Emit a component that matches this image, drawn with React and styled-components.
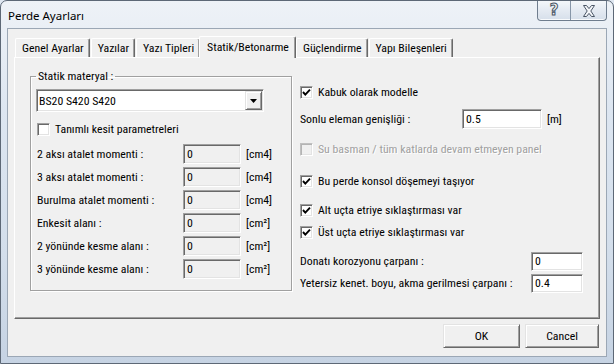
import React from 'react';
import styled, { createGlobalStyle, css } from 'styled-components';

const GlobalStyle = createGlobalStyle`
  html, body { margin: 0; padding: 0; background: #dfe7f1; }
  body {
    font-family: "Roboto", "Liberation Sans", Arial, sans-serif;
    font-stretch: 75%;
    font-size: 11.8px;
    color: #000;
  }
  * { box-sizing: border-box; }
`;

const sunken = css`
  border: 1px solid;
  border-color: #a0a0a0 #ffffff #ffffff #a0a0a0;
  box-shadow: inset 1px 1px 0 #696969, inset -1px -1px 0 #e3e3e3;
`;

const raised = css`
  border: 1px solid;
  border-color: #e3e3e3 #696969 #696969 #e3e3e3;
  box-shadow: inset 1px 1px 0 #ffffff, inset -1px -1px 0 #a0a0a0;
`;

const Window = styled.div`
  width: 614px;
  height: 364px;
  display: flex;
  flex-direction: column;
  padding: 0 6px 6px 6px;
  border: 1px solid #5d6876;
  border-radius: 7px 7px 0 0;
  background: linear-gradient(180deg, #eef2f7 0%, #dde6f1 30%, #d3deeb 70%, #c6d3e3 100%);
`;

const TitleBar = styled.div`
  height: 27px;
  display: flex;
  align-items: flex-start;
  padding-left: 1px;
`;

const Title = styled.span`
  font-family: "Noto Sans", "Open Sans", sans-serif;
  font-stretch: 100%;
  font-size: 11.5px;
  line-height: 27px;
  color: #000;
  margin-top: 1px;
`;

const Caption = styled.div`
  margin-left: auto;
  display: flex;
  height: 20px;
  border: 1px solid #6f7d8e;
  border-top: none;
  border-radius: 0 0 4px 4px;
  overflow: hidden;
  background: linear-gradient(180deg, #f4f7fa 0%, #e4eaf2 50%, #d6dfea 100%);
  box-shadow: inset 0 -1px 0 #f8fafc;
`;

const CapButton = styled.div`
  width: ${p => p.$w}px;
  display: flex;
  align-items: center;
  justify-content: center;
  & + & { border-left: 1px solid #8796a8; }
`;

const HelpGlyph = styled.span`
  font-family: "DejaVu Sans", sans-serif;
  font-stretch: 100%;
  font-size: 15px;
  font-weight: bold;
  color: #f4f6f9;
  -webkit-text-stroke: 1px #4a5666;
  line-height: 1;
`;

const Client = styled.div`
  flex: 1;
  display: flex;
  flex-direction: column;
  background: #f0f0f0;
  border: 1px solid #9ba7b5;
  padding: 0 6px;
`;

const TabStrip = styled.div`
  margin-top: 7px;
  height: 21px;
  display: flex;
  align-items: flex-end;
  gap: 1px;
  padding-left: 1px;
  position: relative;
  z-index: 1;
`;

const Tab = styled.div`
  height: ${p => (p.$active ? 22 : 19)}px;
  margin: ${p => (p.$active ? '0 -1px -1px -2px' : '0')};
  padding: ${p => (p.$active ? '3px 6px 0 7px' : '2px 5px 0 6px')};
  background: #f0f0f0;
  border-top: 1px solid #ffffff;
  border-left: 1px solid #ffffff;
  border-right: 1px solid #696969;
  border-radius: 2px 2px 0 0;
  box-shadow: inset -1px 0 0 #a0a0a0;
  white-space: nowrap;
  line-height: 15px;
  position: relative;
  z-index: ${p => (p.$active ? 2 : 0)};
`;

const Panel = styled.div`
  height: 262px;
  display: flex;
  align-items: flex-start;
  border-top: 1px solid #ffffff;
  border-left: 1px solid #ffffff;
  border-right: 1px solid #696969;
  border-bottom: 1px solid #696969;
  box-shadow: inset -1px -1px 0 #a0a0a0;
`;

const Group = styled.fieldset`
  margin: 11px 0 0 15px;
  width: 262px;
  padding: 0 0 11px 5px;
  border: 1px solid #a0a0a0;
  box-shadow: inset 1px 1px 0 #ffffff, 1px 1px 0 #ffffff;
  min-inline-size: 0;
`;

const Legend = styled.legend`
  padding: 0 2px;
  line-height: 14px;
`;

const Select = styled.div`
  margin-top: 6px;
  width: 228px;
  height: 23px;
  background: #ffffff;
  ${sunken};
  display: flex;
  align-items: center;
  padding: 0 1px 0 2px;
`;

const SelectText = styled.span`
  flex: 1;
`;

const DropButton = styled.div`
  width: 17px;
  height: 19px;
  background: #f0f0f0;
  ${raised};
  display: flex;
  align-items: center;
  justify-content: center;
`;

const CheckRow = styled.div`
  display: flex;
  align-items: center;
  height: ${p => p.$h || 16}px;
  margin-top: ${p => p.$mt || 0}px;
  margin-left: ${p => p.$ml || 0}px;
  color: ${p => (p.$disabled ? '#a0a0a0' : '#000')};
  text-shadow: ${p => (p.$disabled ? '1px 1px 0 #ffffff' : 'none')};
`;

const Box = styled.span`
  width: 13px;
  height: 13px;
  margin-right: 5px;
  flex: none;
  background: ${p => (p.$disabled ? '#f0f0f0' : '#ffffff')};
  border: 1px solid;
  border-color: ${p => (p.$disabled ? '#c0c0c0 #ffffff #ffffff #c0c0c0' : '#a0a0a0 #ffffff #ffffff #a0a0a0')};
  box-shadow: ${p => (p.$disabled ? 'inset 1px 1px 0 #b4b4b4, inset -1px -1px 0 #e3e3e3' : 'inset 1px 1px 0 #696969, inset -1px -1px 0 #e3e3e3')};
  display: flex;
  align-items: center;
  justify-content: center;
`;

const FieldRow = styled.div`
  display: flex;
  align-items: center;
  height: 20px;
  margin-top: ${p => p.$mt ?? 3}px;
  margin-left: ${p => p.$ml || 0}px;
`;

const Label = styled.span`
  width: ${p => p.$w}px;
  flex: none;
  white-space: nowrap;
`;

const Input = styled.div`
  width: ${p => p.$w}px;
  height: ${p => p.$h || 20}px;
  flex: none;
  background: ${p => (p.$disabled ? '#f0f0f0' : '#ffffff')};
  ${sunken};
  display: flex;
  align-items: center;
  padding-left: 3px;
`;

const Unit = styled.span`
  margin-left: 5px;
  white-space: nowrap;
`;

const Column = styled.div`
  margin-left: 8px;
  padding-top: 24px;
  display: flex;
  flex-direction: column;
`;

const ButtonRow = styled.div`
  margin-top: 5px;
  display: flex;
  justify-content: flex-end;
  gap: 5px;
  padding-right: 1px;
`;

const Button = styled.div`
  width: ${p => p.$w}px;
  height: 24px;
  background: #f0f0f0;
  ${raised};
  display: flex;
  align-items: center;
  justify-content: center;
`;

const Check = () => (
  <svg width="9" height="9" viewBox="0 0 9 9">
    <polyline points="1,4 3.3,6.6 8,1.6" fill="none" stroke="#000" strokeWidth="1.9" />
  </svg>
);

const CheckBox = ({ checked, disabled, children, ...rest }) => (
  <CheckRow $disabled={disabled} {...rest}>
    <Box $disabled={disabled}>{checked && <Check />}</Box>
    <span>{children}</span>
  </CheckRow>
);

const tabs = ['Genel Ayarlar', 'Yazılar', 'Yazı Tipleri', 'Statik/Betonarme', 'Güçlendirme', 'Yapı Bileşenleri'];

const leftRows = [
  ['2 aksı atalet momenti :', '[cm4]'],
  ['3 aksı atalet momenti :', '[cm4]'],
  ['Burulma atalet momenti :', '[cm4]'],
  ['Enkesit alanı :', '[cm²]'],
  ['2 yönünde kesme alanı :', '[cm²]'],
  ['3 yönünde kesme alanı :', '[cm²]'],
];

export default function App() {
  return (
    <>
      <GlobalStyle />
      <Window>
        <TitleBar>
          <Title>Perde Ayarları</Title>
          <Caption>
            <CapButton $w={32}><HelpGlyph>?</HelpGlyph></CapButton>
            <CapButton $w={36}>
              <svg width="14" height="12" viewBox="0 0 14 12">
                <path d="M1.5 0.5 H4.5 L7 3.6 L9.5 0.5 H12.5 L8.8 6 L12.5 11.5 H9.5 L7 8.4 L4.5 11.5 H1.5 L5.2 6 Z"
                  fill="#f4f6f9" stroke="#4a5666" strokeWidth="1" strokeLinejoin="round" />
              </svg>
            </CapButton>
          </Caption>
        </TitleBar>
        <Client>
          <TabStrip>
            {tabs.map(t => (
              <Tab key={t} $active={t === 'Statik/Betonarme'}>{t}</Tab>
            ))}
          </TabStrip>
          <Panel>
            <Group>
              <Legend>Statik materyal :</Legend>
              <Select>
                <SelectText>BS20 S420 S420</SelectText>
                <DropButton>
                  <svg width="7" height="4" viewBox="0 0 7 4"><path d="M0 0 H7 L3.5 4 Z" fill="#000" /></svg>
                </DropButton>
              </Select>
              <CheckBox $mt={9} $ml={1}>Tanımlı kesit parametreleri</CheckBox>
              {leftRows.map(([l, u], i) => (
                <FieldRow key={l} $mt={i === 0 ? 7 : 3} $ml={1}>
                  <Label $w={146}>{l}</Label>
                  <Input $w={58} $disabled>0</Input>
                  <Unit>{u}</Unit>
                </FieldRow>
              ))}
            </Group>
            <Column>
              <CheckBox checked $h={20}>Kabuk olarak modelle</CheckBox>
              <FieldRow $mt={7}>
                <Label $w={162}>Sonlu eleman genişliği :</Label>
                <Input $w={80}>0.5</Input>
                <Unit>[m]</Unit>
              </FieldRow>
              <CheckBox disabled $h={20} $mt={10}>Su basman / tüm katlarda devam etmeyen panel</CheckBox>
              <CheckBox checked $h={20} $mt={12}>Bu perde konsol döşemeyi taşıyor</CheckBox>
              <CheckBox checked $h={20} $mt={9}>Alt uçta etriye sıklaştırması var</CheckBox>
              <CheckBox checked $h={20} $mt={2}>Üst uçta etriye sıklaştırması var</CheckBox>
              <FieldRow $mt={9}>
                <Label $w={231}>Donatı korozyonu çarpanı :</Label>
                <Input $w={52} $h={19}>0</Input>
              </FieldRow>
              <FieldRow $mt={2}>
                <Label $w={231}>Yetersiz kenet. boyu, akma gerilmesi çarpanı :</Label>
                <Input $w={52} $h={19}>0.4</Input>
              </FieldRow>
            </Column>
          </Panel>
          <ButtonRow>
            <Button $w={77}>OK</Button>
            <Button $w={74}>Cancel</Button>
          </ButtonRow>
        </Client>
      </Window>
    </>
  );
}
